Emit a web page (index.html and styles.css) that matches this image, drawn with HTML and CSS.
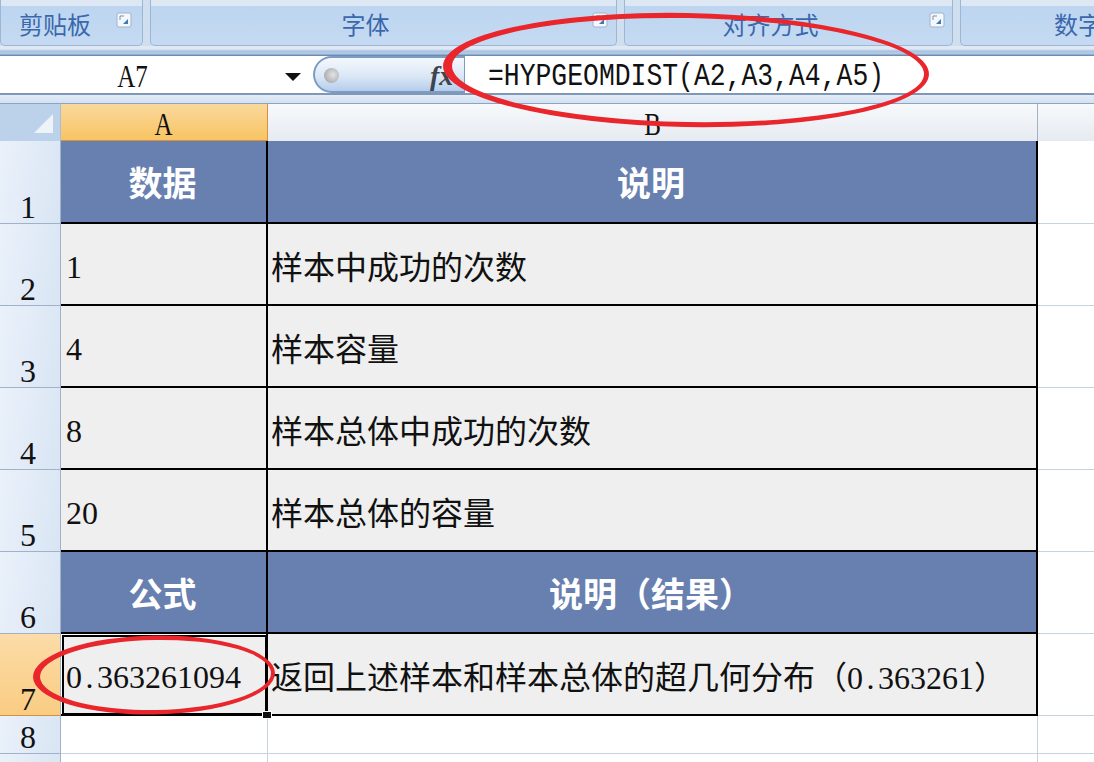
FILE: index.html
```html
<!DOCTYPE html>
<html lang="zh">
<head>
<meta charset="utf-8">
<title>HYPGEOMDIST</title>
<link rel="stylesheet" href="styles.css">
</head>
<body>
<div class="app">
  <div class="ribbon">
    <div class="group g1"><span class="label">剪贴板</span><svg class="launch" viewBox="0 0 16 16"><rect x="1" y="1" width="14" height="14" rx="2" fill="#f4f8fc" stroke="#9db4cf"/><path d="M4 4h4M4 4v4" stroke="#7d8fa6" fill="none"/><path d="M7 12l5-5v5z" fill="#3f79b5"/></svg></div>
    <div class="group g2"><span class="label">字体</span><svg class="launch" viewBox="0 0 16 16"><rect x="1" y="1" width="14" height="14" rx="2" fill="#f4f8fc" stroke="#9db4cf"/><path d="M4 4h4M4 4v4" stroke="#7d8fa6" fill="none"/><path d="M7 12l5-5v5z" fill="#3f79b5"/></svg></div>
    <div class="group g3"><span class="label">对齐方式</span><svg class="launch" viewBox="0 0 16 16"><rect x="1" y="1" width="14" height="14" rx="2" fill="#f4f8fc" stroke="#9db4cf"/><path d="M4 4h4M4 4v4" stroke="#7d8fa6" fill="none"/><path d="M7 12l5-5v5z" fill="#3f79b5"/></svg></div>
    <div class="group g4"><span class="label">数字</span></div>
  </div>
  <div class="ribbon-base"></div>
  <div class="formula-bar">
    <div class="namebox"><span class="name narrow">A7</span><span class="arrow"></span></div>
    <div class="pill"><span class="knob"></span><span class="fx">fx</span></div>
    <div class="formula"><span class="formula-text">=HYPGEOMDIST(A2,A3,A4,A5)</span></div>
  </div>
  <div class="bar-gap"></div>
  <div class="sheet">
    <div class="corner"><span class="tri"></span></div>
    <div class="col col-on"><span class="narrow">A</span></div>
    <div class="col"><span class="narrow">B</span></div>
    <div class="col col-rest"></div>

    <div class="rn">1</div><div class="c hd">数据</div><div class="c hd">说明</div><div class="e"></div>
    <div class="rn">2</div><div class="c num">1</div><div class="c txt">样本中成功的次数</div><div class="e"></div>
    <div class="rn">3</div><div class="c num">4</div><div class="c txt">样本容量</div><div class="e"></div>
    <div class="rn">4</div><div class="c num">8</div><div class="c txt">样本总体中成功的次数</div><div class="e"></div>
    <div class="rn">5</div><div class="c num">20</div><div class="c txt">样本总体的容量</div><div class="e"></div>
    <div class="rn">6</div><div class="c hd">公式</div><div class="c hd">说明（结果）</div><div class="e"></div>
    <div class="rn rn-on">7</div><div class="c num sel"><span>0<span class="dot">.</span>363261094</span></div><div class="c txt"><span>返回上述样本和样本总体的超几何分布（<span class="digits">0<span class="dot">.</span>363261</span>）</span></div><div class="e"></div>
    <div class="rn">8</div><div class="b b1"></div><div class="b"></div><div class="e"></div>
    <div class="rn"></div><div class="b b1"></div><div class="b"></div><div class="e"></div>
  </div>
  <span class="handle"></span>
  <svg class="marks" viewBox="0 0 1094 762" fill="#e8262b" fill-rule="evenodd">
    <path transform="rotate(1 686 70)" d="M443 70a243 57 0 1 0 486 0a243 57 0 1 0 -486 0zM452 70a236 52 0 1 0 472 0a236 52 0 1 0 -472 0z"/>
    <path transform="rotate(-1 154 675)" d="M33 675a121 39.5 0 1 0 242 0a121 39.5 0 1 0 -242 0zM40 675a115.5 35 0 1 0 231 0a115.5 35 0 1 0 -231 0z"/>
  </svg>
</div>
</body>
</html>
```

FILE: styles.css
```css
* { box-sizing: border-box; }
html, body { margin: 0; padding: 0; background: #fff; }
.app {
  position: relative;
  width: 1094px;
  height: 762px;
  overflow: hidden;
  font-family: "Noto Sans CJK SC", sans-serif;
  color: #111;
}
.ribbon {
  display: flex;
  gap: 7px;
  height: 46px;
  background: #cfdff0;
}
.group {
  position: relative;
  display: flex;
  align-items: center;
  justify-content: center;
  height: 46px;
  padding-top: 2px;
  border: 1px solid #9db6d2;
  border-top: 0;
  border-radius: 0 0 5px 5px;
  background: linear-gradient(#dde8f4 0, #dde8f4 6px, #bdd5f0 6px, #c5daf2 100%);
}
.g1 { width: 143px; justify-content: flex-start; padding-left: 18px; }
.g2 { width: 467px; padding-right: 36px; }
.g3 { width: 329px; padding-right: 36px; }
.g4 { flex: 1; border-right: 0; border-radius: 0 0 0 5px; justify-content: flex-start; padding-left: 93px; overflow: hidden; }
.label { font-size: 24px; line-height: 30px; color: #3a68ad; white-space: nowrap; }
.launch { position: absolute; right: 10px; top: 12px; width: 16px; height: 16px; }
.g2 .launch { right: 8px; }
.g3 .launch { right: 7px; }
.ribbon-base {
  height: 10px;
  background: linear-gradient(#dfe9f5 0, #dfe9f5 3px, #a9c3e2 5px, #b4cbe6 8px, #6d8cb2 9px, #6d8cb2 10px);
}
.formula-bar {
  display: flex;
  height: 39px;
  background: #fff;
  border-bottom: 2px solid #8098b8;
}
.namebox {
  position: relative;
  display: flex;
  align-items: center;
  justify-content: center;
  width: 313px;
  padding-right: 47px;
  padding-top: 4px;
  flex: none;
}
.name, .col, .rn, .num, .digits {
  font-family: "Liberation Serif", "Noto Sans CJK SC", serif;
  font-size: 32px;
}
.narrow { display: inline-block; transform: scaleX(0.78); }
.dot { display: inline-block; width: 15px; text-align: center; }
.arrow {
  position: absolute;
  right: 12px;
  top: 17px;
  border: 8px solid transparent;
  border-top: 8px solid #111;
  border-bottom: 0;
}
.pill {
  position: relative;
  flex: none;
  width: 152px;
  border: 2px solid #7c9cc4;
  border-right: 1px solid #7c9cc4;
  border-radius: 19px 0 0 19px;
  background: linear-gradient(#f4f8fd, #dbe7f6 55%, #b5cdec);
}
.knob {
  position: absolute;
  left: 9px;
  top: 10px;
  width: 15px;
  height: 15px;
  border-radius: 50%;
  background: radial-gradient(circle at 60% 45%, #e4e4e4, #96999e);
}
.fx {
  position: absolute;
  left: 115px;
  top: 1px;
  font-family: "Liberation Serif", serif;
  font-style: italic;
  font-weight: 700;
  font-size: 28px;
  line-height: 34px;
  color: #3c444e;
}
.formula { flex: 1; padding-left: 23px; line-height: 37px; white-space: nowrap; padding-top: 4px; }
.formula-text {
  display: inline-block;
  font-family: "Liberation Mono", monospace;
  font-size: 32px;
  line-height: 34px;
  transform: scaleX(0.825);
  transform-origin: left center;
}
.bar-gap { height: 8px; background: linear-gradient(#e4edf7, #d3e1f1); }
.sheet {
  display: grid;
  grid-template-columns: 61px 207px 770px 1fr;
  grid-template-rows: 38px 83px repeat(6, 82px) 38px 38px;
}
.corner {
  position: relative;
  background: #bcd1ea;
  border-right: 1px solid #a9bdd6;
  border-top: 1px solid #8aa4c4;
}
.tri {
  position: absolute;
  right: 7px;
  bottom: 8px;
  border-style: solid;
  border-width: 0 0 19px 19px;
  border-color: transparent transparent #eef3f9 transparent;
}
.col {
  display: flex;
  align-items: center;
  justify-content: center;
  padding-top: 4px;
  background: linear-gradient(#f7f9fb, #e6ebf1);
  border-top: 1px solid #8aa4c4;
  border-right: 1px solid #9fb2c8;
}
.col-on {
  background: linear-gradient(#fad89c, #f8c463);
  border-right: 1px solid #d8903c;
  border-bottom: 1px solid #d8903c;
}
.col-rest { border-right: 0; }
.rn {
  display: flex;
  align-items: flex-end;
  justify-content: center;
  line-height: 32px;
  padding-right: 4px;
  background: linear-gradient(100deg, #eaf1fa, #d9e5f4);
  border-right: 1px solid #9fb2c8;
  border-bottom: 1px solid #9fb2c8;
}
.rn-on { background: linear-gradient(#fcdca8, #f9cc82); border-bottom-color: #d8903c; }
.c {
  display: flex;
  align-items: center;
  background: #efefef;
  border-right: 2px solid #000;
  border-bottom: 2px solid #000;
  white-space: nowrap;
}
.hd {
  justify-content: center;
  padding-right: 2px;
  background: #6880b0;
  color: #fff;
  font-size: 34px;
  font-weight: 700;
}
.num { padding-left: 5px; padding-top: 6px; }
.txt { padding-left: 3px; font-size: 32px; padding-top: 2px; }
.sel { outline: 2px solid #000; outline-offset: -3px; box-shadow: inset 0 0 0 1px #fff; }
.b { border-right: 1px solid #c6d2de; border-bottom: 1px solid #c6d2de; background: #fff; }
.e { border-bottom: 1px solid #c6d2de; background: #fff; }
.handle {
  position: absolute;
  left: 262px;
  top: 711px;
  width: 10px;
  height: 8px;
  background: #111;
  border: 1px solid #fff;
}
.marks { position: absolute; left: 0; top: 0; width: 1094px; height: 762px; pointer-events: none; }
```
